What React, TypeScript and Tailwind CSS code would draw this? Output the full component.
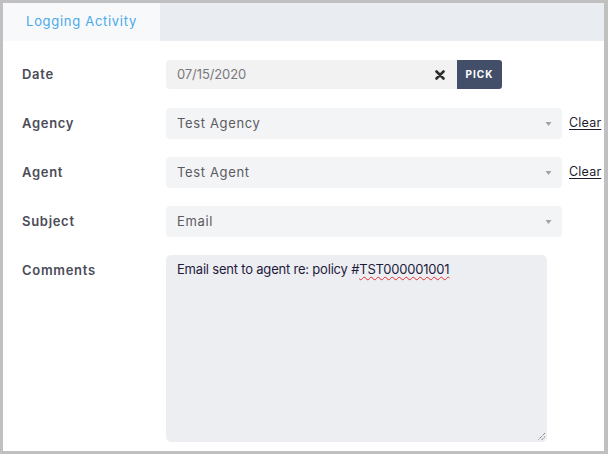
import React from "react";

const font = { fontFamily: "Inter, 'Open Sans', sans-serif" };

function Arrow() {
  return (
    <svg width="7" height="5" viewBox="0 0 7 5" className="absolute right-[10px] top-1/2 -translate-y-1/2">
      <path d="M0.5 0.5 L6.5 0.5 L3.5 4.5 Z" fill="#a3a3a3" />
    </svg>
  );
}

function Label({ children }: { children: React.ReactNode }) {
  return <div className="w-[144px] shrink-0 text-[13px] font-semibold text-[#4b4c58] tracking-[0.7px]">{children}</div>;
}

function SelectRow({ label, value, clear }: { label: string; value: string; clear?: boolean }) {
  return (
    <div className="flex items-center h-[31px]">
      <Label>{label}</Label>
      <div className="relative w-[396px] h-[31px] rounded-[4px] bg-[#f3f4f6] flex items-center pl-[11px] text-[13px] text-[#5b5b5f] tracking-[0.65px]">
        {value}
        <Arrow />
      </div>
      {clear && <a className="ml-[7px] text-[12.5px] text-[#1d1d2e] underline underline-offset-2 tracking-[0.2px]">Clear</a>}
    </div>
  );
}

export default function App() {
  return (
    <div className="w-[608px] h-[454px] bg-[#c0c0c0] pt-[3px] pl-[3px] pr-[4px] pb-[3px]" style={font}>
      <div className="w-full h-full bg-white flex flex-col">
        <div className="h-[38px] bg-[#e9edf1] flex">
          <div className="w-[157px] h-full bg-[#f7f9fb] flex items-center justify-center text-[13px] text-[#4aa9e9] tracking-[0.7px]">
            Logging Activity
          </div>
        </div>
        <div className="pt-[18px] pl-[19px] flex flex-col gap-[18px]">
          <div className="flex items-center h-[31px]">
            <Label>Date</Label>
            <div className="w-[291px] h-[29px] rounded-l-[4px] bg-[#f2f2f2] flex items-center pl-[11px] pr-[12px] text-[13px] text-[#78787c] tracking-[-0.1px]">
              <span className="flex-1">07/15/2020</span>
              <svg width="10" height="10" viewBox="0 0 10 10">
                <path d="M1.5 1.5 L8.5 8.5 M8.5 1.5 L1.5 8.5" stroke="#2e2e2e" strokeWidth="2.6" strokeLinecap="round" />
              </svg>
            </div>
            <div className="w-[45px] h-[29px] rounded-r-[3px] bg-[#434f68] flex items-center justify-center text-[10px] font-bold text-white tracking-[1px]">
              PICK
            </div>
          </div>
          <SelectRow label="Agency" value="Test Agency" clear />
          <SelectRow label="Agent" value="Test Agent" clear />
          <SelectRow label="Subject" value="Email" />
          <div className="flex items-start">
            <div className="pt-[6px]"><Label>Comments</Label></div>
            <div className="relative w-[381px] h-[187px] rounded-[5px] bg-[#edeef2] pl-[11px] pt-[5px] text-[13px] text-[#1f1b3d] tracking-[-0.2px]">
              Email sent to agent re: policy #<span className="underline decoration-wavy decoration-[#e03030] decoration-1 underline-offset-2">TST000001001</span>
              <svg width="10" height="10" viewBox="0 0 10 10" className="absolute right-[1px] bottom-[1px]">
                <path d="M9 2 L2 9 M9 5.5 L5.5 9" stroke="#555" strokeWidth="1" strokeDasharray="1 1" />
              </svg>
            </div>
          </div>
        </div>
      </div>
    </div>
  );
}
